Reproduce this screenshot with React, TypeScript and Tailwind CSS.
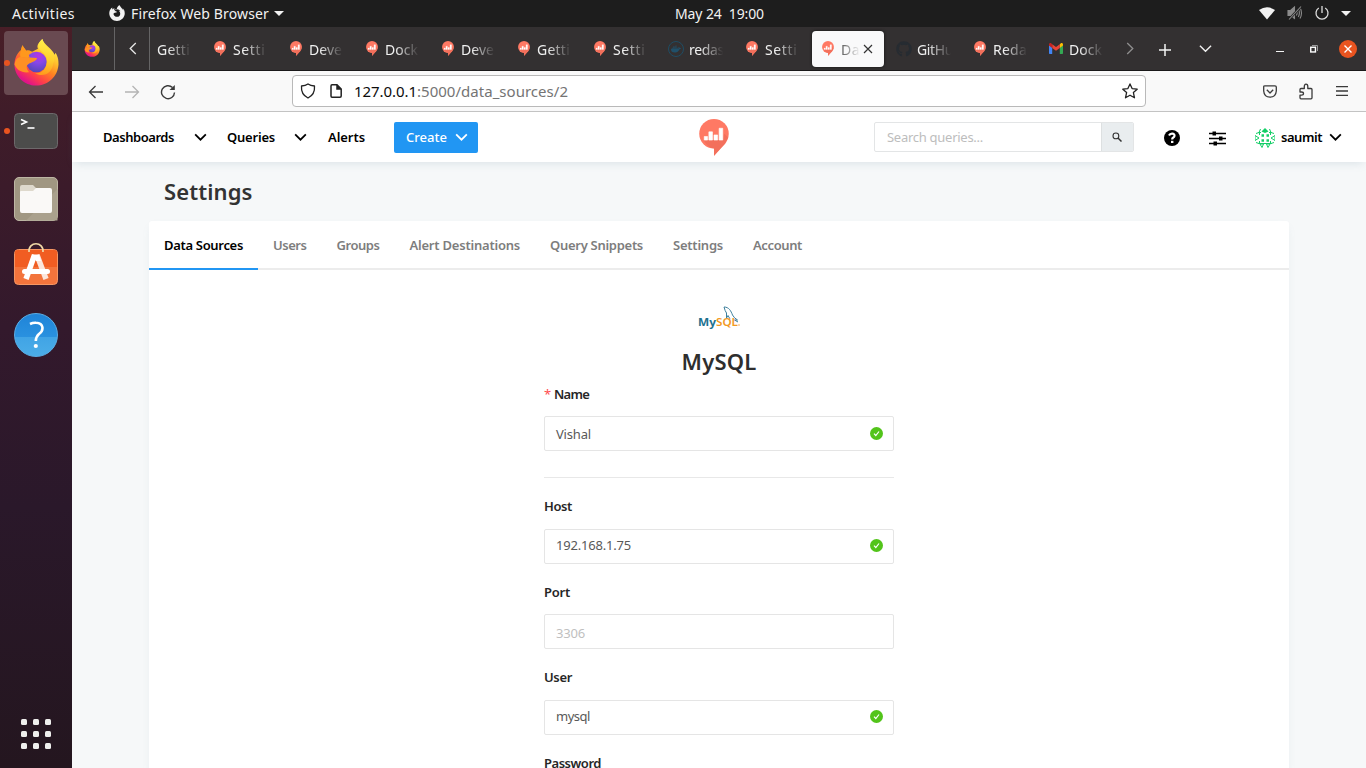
import React, { useLayoutEffect, useRef } from "react";
import { FaGithub } from "react-icons/fa";
import { SiDocker, SiFirefoxbrowser } from "react-icons/si";

/* Single-line label whose tracking is adjusted so that it fills `w` pixels. */
function Label({ w, className = "", children }: { w: number; className?: string; children: string }) {
  const ref = useRef<HTMLSpanElement>(null);
  useLayoutEffect(() => {
    const el = ref.current;
    if (!el) return;
    el.style.letterSpacing = "0px";
    const natural = el.getBoundingClientRect().width;
    el.style.letterSpacing = `${(w - natural) / children.length}px`;
  }, [w, children]);
  return (
    <span ref={ref} className={`inline-block shrink-0 whitespace-pre ${className}`}>
      {children}
    </span>
  );
}

function FirefoxLogo({ id, className }: { id: string; className: string }) {
  return (
    <svg viewBox="0 0 46 48" className={className}>
      <defs>
        <linearGradient id={`${id}b`} x1="0.9" y1="0.15" x2="0.35" y2="0.98">
          <stop offset="0" stopColor="#fff04a" />
          <stop offset="0.28" stopColor="#ffc22e" />
          <stop offset="0.52" stopColor="#ff8420" />
          <stop offset="0.78" stopColor="#ff4048" />
          <stop offset="1" stopColor="#e0128a" />
        </linearGradient>
        <radialGradient id={`${id}g`} cx="0.6" cy="0.2" r="0.85">
          <stop offset="0" stopColor="#b833e1" />
          <stop offset="0.4" stopColor="#8847ea" />
          <stop offset="1" stopColor="#5047b4" />
        </radialGradient>
        <linearGradient id={`${id}f`} x1="0.6" y1="0" x2="0.5" y2="1">
          <stop offset="0" stopColor="#fff24c" />
          <stop offset="0.55" stopColor="#ffd02f" />
          <stop offset="1" stopColor="#ff9a1b" />
        </linearGradient>
      </defs>
      <path
        d="M1 26C1 20 4 14 7.500 11.500L9 6.500L13 12C15 11.500 17 12 19 13L25 10C23 6 27 3 29.500 0C31 6 39 9 42 16L43 14C46 19 46 23 46 26C45 39 35 47.500 23 47.500C11 47.500 1 38 1 26Z"
        fill={`url(#${id}b)`}
      />
      <ellipse cx="23.500" cy="23.500" rx="10.500" ry="10.500" fill={`url(#${id}g)`} />
      <path d="M29.500 0C24 5 24 9 29 13C34 17 35.500 22 33 28C31 33 27 35 22 35C31 40 40 34 40.500 25C42 22 42 20 41 17C38 10 31 7 29.500 0Z" fill={`url(#${id}f)`} />
      <path d="M1 26C2 21 4 19 7 18.500C11 18 15 20 17 19L24 19.500C24 22 20 23.500 17.500 24.500C13 26 12 29 16 34C8 35 3 31 1 26Z" fill="#ff9024" />
      <path d="M7 18.500C6 15 8 11 9 6.500L13 12C15 11.500 17 12 18 12.500C15.500 14 15 16.500 17 19C13 20 11 18 7 18.500Z" fill="#ff981d" />
    </svg>
  );
}

function RedashLogo({ className }: { className: string }) {
  return (
    <svg viewBox="0 0 29 36" className={className}>
      <path d="M14.500 0A14.300 14.300 0 1 1 14.500 28.700A14.300 14.300 0 0 1 14.500 0Z" fill="#ff7964" />
      <path d="M14.500 28V36L26.500 22.500Z" fill="#ff7964" />
      <path d="M4.500 20.500H23L24.500 14L28 18C27 21 25.500 24 23 26.500L14.500 35.500V28.600C11 28.600 7 26 4.500 20.500Z" fill="#ed6b58" opacity="0.65" />
      <path d="M5 17h3.200v3.500h-3.200zM9.500 12.500h3.500v8h-3.500zM14.500 15.500h3.500v5h-3.500zM19.500 9h3.500v11.500h-3.500z" fill="#fff" stroke="#fff" strokeWidth="0.600" strokeLinejoin="round" />
    </svg>
  );
}

function GmailLogo() {
  return (
    <svg viewBox="0 0 14 11" className="h-[11px] w-[14px]">
      <path d="M0 2v8.200c0 .5.300.8.800.8H3.200V4.500z" fill="#4285f4" />
      <path d="M14 2v8.200c0 .5-.3.800-.8.800H10.800V4.500z" fill="#34a853" />
      <path d="M10.800 1.200V5L14 2.600V1.500C14 .2 12.600-.4 11.600.5z" fill="#fbbc04" />
      <path d="M3.200 5V1.200L7 4l3.800-2.800V5L7 7.800z" fill="#ea4335" />
      <path d="M0 1.500V2.600L3.200 5V1.200L2.400.5C1.400-.4 0 .2 0 1.500z" fill="#c5221f" />
    </svg>
  );
}

function Chevron({ className, d = "M1 1.500L7 7.500L13 1.500", width = 2 }: { className: string; d?: string; width?: number }) {
  return (
    <svg viewBox="0 0 14 9" className={className} fill="none" stroke="currentColor" strokeWidth={width}>
      <path d={d} />
    </svg>
  );
}

function TopBar() {
  return (
    <div className="flex h-[27px] shrink-0 items-center bg-[#1d1d1d] text-[14px] text-[#f2f2f2]">
      <Label w={63} className="ml-3">Activities</Label>
      <SiFirefoxbrowser className="-mt-[2px] ml-[34px] h-[16px] w-[16px]" />
      <Label w={138} className="ml-[6px]">Firefox Web Browser</Label>
      <svg viewBox="0 0 10 5" className="ml-[5px] h-[5px] w-[10px]"><path d="M0 0H10L5 5Z" fill="#f2f2f2" /></svg>
      <Label w={89} className="-mt-px ml-[391px]">May 24  19:00</Label>
      <svg viewBox="0 0 16 13" className="-mt-px ml-auto h-[13px] w-[16px]"><path d="M0 3Q8-2.500 16 3L8 12.500Z" fill="#f2f2f2" /></svg>
      <svg viewBox="0 0 16 16" className="-mt-px ml-3 h-4 w-4" fill="none" stroke="#8b8b8b" strokeWidth="1.100">
        <path d="M1 5.500H3.500L7.500 2V13.500L3.500 10.500H1Z" fill="#8b8b8b" />
        <path d="M9.300 5.500Q11 8 9.300 10.500M11.300 4Q13.500 8 11.300 12M13 2.500Q16 8 13 13.500" />
        <path d="M2 14.500L14 1.500" stroke="#1d1d1d" strokeWidth="2.500" />
        <path d="M2 14.500L14 1.500" />
      </svg>
      <svg viewBox="0 0 16 16" className="-mt-px ml-[11px] h-4 w-4" fill="none" stroke="#dedede" strokeWidth="1.300">
        <path d="M8 1V8M4.800 3A6 6 0 1 0 11.200 3" />
      </svg>
      <svg viewBox="0 0 10 5" className="mr-[15px] ml-[11px] h-[5px] w-[10px]"><path d="M0 0H10L5 5Z" fill="#f2f2f2" /></svg>
    </div>
  );
}

function Dock() {
  return (
    <div className="flex w-[72px] shrink-0 flex-col bg-[linear-gradient(#481e27_0px,#3f1c29_90px,#33192c_300px,#2a182a_480px,#24161f_741px)]">
      <div className="mt-[4px] flex h-16 items-center">
        <span className="h-[6px] w-[6px] translate-x-[4px] rounded-full bg-[#e95420]" />
        <span className="-ml-[2px] flex h-16 w-16 items-center justify-center rounded-[4px] bg-[#694a51] pb-[2px]">
          <FirefoxLogo id="dock" className="h-[47px] w-[46px]" />
        </span>
      </div>
      <div className="mt-[17px] flex h-[38px] items-center">
        <span className="h-[6px] w-[6px] translate-x-[4px] rounded-full bg-[#e95420]" />
        <svg viewBox="0 0 44 36" className="ml-[8px] h-[36px] w-[44px]">
          <rect x="0.500" y="0.500" width="43" height="35" rx="4" fill="#4c4c4b" stroke="#6d696b" />
          <path d="M7 6.500L12.500 9L7 11.500" fill="none" stroke="#fff" strokeWidth="1.600" />
          <path d="M13.500 15H20.500" stroke="#fff" strokeWidth="1.600" />
        </svg>
      </div>
      <svg viewBox="0 0 44 44" className="mt-[27px] ml-[14px] h-[44px] w-[44px]">
        <rect x="0.500" y="0.500" width="43" height="43" rx="4.500" fill="#a09782" stroke="#bdb6a4" />
        <path d="M12 43.500L43.500 12V43.500Z" fill="#aaa18d" />
        <path d="M6 10Q6 8 8 8H19L22 11H36V20H6Z" fill="#ded9cc" />
        <path d="M6 15Q6 14 7 14H19L22 11H36Q38 11 38 13V34Q38 36 36 36H8Q6 36 6 34Z" fill="#faf9f7" />
      </svg>
      <svg viewBox="0 0 44 44" className="mt-[21px] ml-[14px] h-[44px] w-[44px]">
        <rect x="0.500" y="7.500" width="43" height="35" rx="4" fill="#f3743c" stroke="#f59663" />
        <path d="M1 10Q1 8 4 8H40Q43 8 43 10V25H1Z" fill="#f15d22" />
        <path d="M15 10C14-1 30-1 29 10" fill="none" stroke="#efd8a6" strokeWidth="1.700" />
        <path d="M20.500 13L12 37" stroke="#fff" strokeWidth="5.500" />
        <path d="M23 13L32 37" stroke="#fbe6dc" strokeWidth="5.500" />
        <path d="M18 12.500H25L27 19L22 19Z" fill="#fff" />
        <rect x="8" y="27" width="28" height="5" rx="2.500" fill="#fff" />
      </svg>
      <div className="mt-[27px] ml-[14px] flex h-[44px] w-[44px] items-center justify-center rounded-full border border-[#5aaee6] bg-[linear-gradient(#1f84d8_0%,#2a91df_54%,#41a4e5_55%,#4bade8_100%)]">
        <svg viewBox="0 0 16 28" className="h-[28px] w-[16px]">
          <path d="M2 3Q5 1.500 8 1.700C16 2 16 9.500 11 13Q8 15.500 7.800 20" fill="none" stroke="#fff" strokeWidth="2.600" />
          <circle cx="7.800" cy="25" r="2.100" fill="#fff" />
        </svg>
      </div>
      <div className="mt-auto mb-[19px] ml-[21px] grid w-[30px] grid-cols-3 gap-[6px]">
        {Array.from({ length: 9 }, (_, i) => (
          <span key={i} className="h-[6px] w-[6px] rounded-[1.500px] bg-[#efefed]" />
        ))}
      </div>
    </div>
  );
}

const tabs: { title: string; w: number; icon: "redash" | "docker" | "github" | "gmail"; active?: boolean }[] = [
  { title: "Getti", w: 33, icon: "redash" },
  { title: "Setti", w: 32.5, icon: "redash" },
  { title: "Deve", w: 33, icon: "redash" },
  { title: "Dock", w: 33, icon: "redash" },
  { title: "Deve", w: 33, icon: "redash" },
  { title: "Getti", w: 33, icon: "redash" },
  { title: "Setti", w: 32.5, icon: "redash" },
  { title: "redas", w: 35, icon: "docker" },
  { title: "Setti", w: 32.5, icon: "redash" },
  { title: "Da", w: 19, icon: "redash", active: true },
  { title: "GitHu", w: 36, icon: "github" },
  { title: "Reda", w: 34, icon: "redash" },
  { title: "Dock", w: 33, icon: "gmail" },
];

function BrowserTab({ tab }: { tab: (typeof tabs)[number] }) {
  return (
    <div className="flex h-[43px] w-[76px] shrink-0 items-center px-[2px]">
      <div className={`flex h-[36px] w-[72px] items-center rounded-[4px] ${tab.active ? "bg-[#f9f9fa] text-[#555] shadow-[0_0_3px_#111]" : "text-[#f0f0f0]"}`}>
        <span className="ml-[8px] flex h-4 w-4 shrink-0 items-center justify-center">
          {tab.icon === "redash" && <RedashLogo className="h-[15px] w-[12px]" />}
          {tab.icon === "docker" && (
            <span className="flex h-4 w-4 items-center justify-center rounded-full border border-[#1f4c63] text-[#20506a]">
              <SiDocker className="h-[10px] w-[10px]" />
            </span>
          )}
          {tab.icon === "github" && <FaGithub className="h-4 w-4 text-[#262b31]" />}
          {tab.icon === "gmail" && <GmailLogo />}
        </span>
        <span
          className={`mt-[2px] ml-[5px] shrink-0 overflow-hidden text-[14px] leading-5 ${
            tab.active
              ? "w-[19px] [mask-image:linear-gradient(to_right,black_0%,transparent_100%)]"
              : "w-[36px] [mask-image:linear-gradient(to_right,black_30%,transparent_95%)]"
          }`}
        >
          <Label w={tab.w}>{tab.title}</Label>
        </span>
        {tab.active && (
          <svg viewBox="0 0 10 10" className="ml-[3px] h-[10px] w-[10px] shrink-0" stroke="#333" strokeWidth="1.200"><path d="M1 1L9 9M9 1L1 9" /></svg>
        )}
      </div>
    </div>
  );
}

function TabStrip() {
  return (
    <div className="flex h-[44px] shrink-0 items-center border-b border-[#1a191a] bg-[#333031] text-[#f0f0f0]">
      <div className="flex h-full w-[43px] items-center justify-center border-r border-[#656465] pr-[2px]">
        <FirefoxLogo id="pin" className="h-[16px] w-[16px]" />
      </div>
      <div className="flex h-full w-[35px] items-center justify-center border-r border-[#656465]">
        <svg viewBox="0 0 8 14" className="ml-[2px] h-[13px] w-[8px]" fill="none" stroke="#e8e8e8" strokeWidth="1.400"><path d="M7 1L1 7L7 13" /></svg>
      </div>
      <div className="flex w-[964px] overflow-hidden">
        <div className="-ml-[24px] flex">
          {tabs.map((t, i) => <BrowserTab key={i} tab={t} />)}
        </div>
      </div>
      <svg viewBox="0 0 8 14" className="ml-[12px] h-[13px] w-[8px]" fill="none" stroke="#8f8e8f" strokeWidth="1.400"><path d="M1 1L7 7L1 13" /></svg>
      <svg viewBox="0 0 12 12" className="mt-[2px] ml-[25px] h-[12px] w-[12px]" stroke="#f4f4f4" strokeWidth="1.500"><path d="M6 0V12M0 6H12" /></svg>
      <Chevron className="ml-[28px] h-[9px] w-[13px]" width={1.5} />
      <span className="mt-[5px] ml-[64px] h-[1px] w-[8px] bg-[#f4f4f4]" />
      <svg viewBox="0 0 8 8" className="mt-px ml-[26px] h-[8px] w-[8px]" fill="none">
        <path d="M2 0.500H7.500V6" stroke="#9a999a" /><rect x="0.750" y="2.250" width="4.700" height="4.700" stroke="#fff" strokeWidth="1.400" />
      </svg>
      <span className="ml-[21px] flex h-[18px] w-[18px] items-center justify-center rounded-full bg-[#e95420]">
        <svg viewBox="0 0 8 8" className="h-[8px] w-[8px]" stroke="#fff" strokeWidth="1.400"><path d="M0.500 0.500L7.500 7.500M7.500 0.500L0.500 7.500" /></svg>
      </span>
    </div>
  );
}

function Toolbar() {
  return (
    <div className="flex h-[41px] shrink-0 items-center border-b border-[#c4c4c4] bg-[#f9f9f9] text-[#3a3a3a]">
      <svg viewBox="0 0 16 16" className="mt-px ml-[16px] h-4 w-4" fill="none" stroke="currentColor" strokeWidth="1.300"><path d="M15 8H1.500M7.500 2L1.500 8L7.500 14" /></svg>
      <svg viewBox="0 0 16 16" className="mt-px ml-5 h-4 w-4" fill="none" stroke="#b4b4b4" strokeWidth="1.300"><path d="M1 8H14.500M8.500 2L14.500 8L8.500 14" /></svg>
      <svg viewBox="0 0 16 16" className="mt-[1px] ml-5 h-4 w-4" fill="none" stroke="currentColor" strokeWidth="1.400"><path d="M14.500 8.500A6.500 6.500 0 1 1 12.500 3.500" /><path d="M14.800 1V6H9.500Z" fill="currentColor" stroke="none" /></svg>
      <div className="ml-[116px] flex h-[32px] w-[854px] items-center rounded-[4px] border border-[#b9b9b9] bg-white text-[15px]">
        <svg viewBox="0 0 16 16" className="ml-[7px] h-4 w-4" fill="none" stroke="#222" strokeWidth="1.300"><path d="M8 1Q5.500 2.800 1.500 3Q0.800 11.500 8 15Q15.200 11.500 14.500 3Q10.500 2.800 8 1Z" strokeLinejoin="round" /></svg>
        <svg viewBox="0 0 12 14" className="ml-[14px] h-[14px] w-[12px]" fill="none" stroke="#222" strokeWidth="1.500"><path d="M1 2Q1 .8 2 .8H7L11.200 5V12Q11.200 13.200 10 13.200H2Q1 13.200 1 12Z" /><path d="M7 1V5H11" fill="#222" /></svg>
        <Label w={63} className="ml-[12px] text-[#0c0c0c]">127.0.0.1</Label>
        <Label w={151} className="text-[#747474]">:5000/data_sources/2</Label>
        <svg viewBox="0 0 16 16" className="mr-[7px] ml-auto h-4 w-4" fill="none" stroke="#222" strokeWidth="1.300" strokeLinejoin="round"><path d="M8 .9L10.100 5.600L15.200 6.200L11.400 9.600L12.500 14.800L8 12.200L3.500 14.800L4.600 9.600L.8 6.200L5.900 5.600Z" /></svg>
      </div>
      <svg viewBox="0 0 14 13" className="ml-[117px] h-[13px] w-[14px]" fill="none" stroke="currentColor" strokeWidth="1.300" strokeLinejoin="round"><path d="M2 .8H12Q13.300.8 13.300 2V6Q12.800 12.200 7 12.200Q1.200 12.200.7 6V2Q.7.800 2 .8Z" /><path d="M3.800 4.800L7 8L10.200 4.800" /></svg>
      <svg viewBox="0 0 16 17" className="ml-[21px] h-[17px] w-4" fill="none" stroke="currentColor" strokeWidth="1.300" strokeLinejoin="round"><path d="M2 9H3.500Q5.500 9 5.500 10.600Q5.500 12.200 3.500 12.200H2V14.800Q2 15.800 3 15.800H13Q14 15.800 14 14.800V6.500Q14 5.500 13 5.500H9.800V3.500Q9.800 1.200 8 1.200Q6.300 1.200 6.300 3.500V5.500H3Q2 5.500 2 6.500Z" /></svg>
      <svg viewBox="0 0 12 10" className="-mt-px ml-[22px] h-[10px] w-[12px]" stroke="currentColor" strokeWidth="1.300"><path d="M0 .7H12M0 5H12M0 9.300H12" /></svg>
    </div>
  );
}

function Avatar() {
  return (
    <svg viewBox="0 0 20 20" className="h-5 w-5" fill="none" stroke="#13ce66">
      <path d="M10 0L13.500 3.500L10 5L6.500 3.500Z" fill="#13ce66" stroke="none" />
      <path d="M5.500 1L4 4.500L1 5.500M14.500 1L16 4.500L19 5.500M0 7.500L4 10L0 12.500ZM20 7.500L16 10L20 12.500ZM1 14.500L4 15.500M19 14.500L16 15.500M5 16L7 19.500L8.500 16ZM11.500 16L13 19.500L15 16Z" strokeWidth="1" />
      <path d="M3.500 4.500H6M14 4.500H16.500M3.500 15.500H16.500M4.500 4V7M15.500 4V7M4.500 13V16M15.500 13V16" strokeWidth="1" />
      <path d="M6.500 7.500H9M11.500 7.500H14M6.500 12.500H9M11.500 12.500H14" strokeWidth="2.400" />
    </svg>
  );
}

function AppHeader() {
  return (
    <div className="z-10 flex h-[50px] shrink-0 items-center bg-white text-[13px] font-semibold text-black shadow-[0_4px_9px_-3px_rgba(102,136,153,0.2)]">
      <Label w={71} className="mt-[2px] ml-[31px]">Dashboards</Label>
      <Chevron className="ml-[20px] h-[8px] w-[13px]" />
      <Label w={48} className="mt-[2px] ml-[20px]">Queries</Label>
      <Chevron className="ml-[19px] h-[8px] w-[13px]" />
      <Label w={37} className="mt-[2px] ml-[21px]">Alerts</Label>
      <div className="ml-[29px] flex h-[31px] w-[84px] items-center rounded-[2px] bg-[#2196f3] font-medium text-white">
        <Label w={41} className="mt-[2px] ml-[12px]">Create</Label>
        <Chevron className="ml-[8px] h-[8px] w-[13px]" />
      </div>
      <RedashLogo className="mt-px ml-[221px] h-[37px] w-[30px]" />
      <div className="ml-[145px] flex h-[30px] w-[260px] overflow-hidden rounded-[2px] border border-[#e3e5e6] font-normal">
        <div className="flex w-[226px] items-center pt-[2px] pl-[12px] text-[#bdbdbd]"><Label w={96}>Search queries...</Label></div>
        <div className="flex flex-1 items-center justify-center border-l border-[#dde0e1] bg-[#e9edef]">
          <svg viewBox="0 0 10 10" className="-mt-px mr-px h-[10px] w-[10px]" fill="none" stroke="#333"><circle cx="3.900" cy="3.900" r="2.900" strokeWidth="1.100" /><path d="M6 6L9.500 9.500" strokeWidth="1.500" /></svg>
        </div>
      </div>
      <svg viewBox="0 0 16 16" className="mt-px ml-[30px] h-4 w-4"><circle cx="8" cy="8" r="8" fill="#000" /><path d="M5 5.500Q6 3.500 8.200 3.600Q10.600 3.700 10.500 5.800Q10.400 7 9 7.800Q8.200 8.300 8.200 9.500" fill="none" stroke="#fff" strokeWidth="2.200" /><path d="M7 10.800H9.400V13H7Z" fill="#fff" /></svg>
      <svg viewBox="0 0 17 15" className="mt-[2px] ml-[29px] h-[15px] w-[17px]" stroke="#000"><path d="M0 2.500H17M0 7.500H17M0 12.500H17" strokeWidth="1.500" /><path d="M3.500 2.500H7M10 7.500H13.500M4.500 12.500H8" strokeWidth="4" /></svg>
      <div className="mt-px ml-[29px] flex items-center"><Avatar /></div>
      <Label w={41} className="mt-[2px] ml-[6px]">saumit</Label>
      <Chevron className="ml-[7px] h-[8px] w-[13px]" />
    </div>
  );
}

const settingsTabs: [string, number][] = [
  ["Data Sources", 79],
  ["Users", 33.5],
  ["Groups", 43],
  ["Alert Destinations", 110.5],
  ["Query Snippets", 93],
  ["Settings", 50],
  ["Account", 49],
];

function MySqlLogo() {
  return (
    <svg viewBox="0 0 42 24" className="h-[24px] w-[42px]">
      <path d="M26 1C31 1 33 5 34.500 9Q36 12 39.500 14L36.500 14L40 16M26 1Q27 5 28.500 7V12L30 9.500L32 13" fill="none" stroke="#3d7f9c" strokeWidth="1" />
      <text x="0" y="19.500" fontSize="10.500" fontWeight="700" textLength="18" lengthAdjust="spacingAndGlyphs" fill="#20718f">My</text>
      <text x="18" y="19.500" fontSize="10.500" fontWeight="600" textLength="22" lengthAdjust="spacingAndGlyphs" fill="#f29a1f">SQL</text>
      <circle cx="41" cy="19" r="0.700" fill="#f29a1f" />
    </svg>
  );
}

const fieldStyles = {
  low: "pt-[2px] text-[#595959]",
  high: "pb-px text-[#595959]",
  placeholder: "pt-[4px] text-[#bfbfbf]",
};

function Field({ value, w, kind, valid }: { value: string; w: number; kind: keyof typeof fieldStyles; valid?: boolean }) {
  return (
    <div className={`flex h-[35px] items-center justify-between rounded-[2px] border border-[#e5e5e5] pr-[10px] pl-[11px] ${fieldStyles[kind]}`}>
      <Label w={w}>{value}</Label>
      {valid && (
        <svg viewBox="0 0 13 13" className="-mt-[2px] h-[13px] w-[13px]"><circle cx="6.500" cy="6.500" r="6.500" fill="#52c41a" /><path d="M4 6.700L5.800 8.500L9 4.500" fill="none" stroke="#fff" strokeWidth="1.200" /></svg>
      )}
    </div>
  );
}

const labelClass = "h-5 leading-5 font-semibold text-[#262626]";

function SettingsPage() {
  return (
    <div className="flex flex-1 flex-col overflow-hidden bg-[#f6f8f9]">
      <div className="mt-[14px] ml-[92px] flex h-[30px] items-center text-[22px] font-semibold text-[#333]"><Label w={88.5}>Settings</Label></div>
      <div className="mt-[15px] ml-[77px] flex h-[620px] w-[1140px] flex-col rounded-t-[3px] bg-white text-[13px] shadow-[0_4px_9px_-3px_rgba(102,136,153,0.15)]">
        <div className="flex h-[49px] shrink-0 border-b-2 border-[#ececec]">
          {settingsTabs.map(([name, w], i) => (
            <div key={name} className={`flex h-[49px] items-center px-[15px] pt-[2px] font-semibold ${i === 0 ? "border-b-2 border-[#2196f3] text-black" : "border-b-2 border-transparent text-[#7d7d7d]"}`}>
              <Label w={w}>{name}</Label>
            </div>
          ))}
        </div>
        <div className="mx-auto flex w-[350px] flex-col">
          <div className="mt-[36px] flex h-[24px] justify-center"><MySqlLogo /></div>
          <div className="mt-[16px] flex h-[30px] items-center justify-center text-[22px] font-semibold text-[#2e2e2e]"><Label w={75}>MySQL</Label></div>
          <div className={`mt-[8px] flex ${labelClass}`}>
            <span className="w-[10px] font-normal text-[#ff4d4f]">*</span>
            <Label w={35}>Name</Label>
          </div>
          <div className="mt-[12px]"><Field value="Vishal" w={35} kind="low" valid /></div>
          <div className="mt-[26px] h-px bg-[#e8e8e8]" />
          <div className={`mt-[18px] ${labelClass}`}><Label w={28}>Host</Label></div>
          <div className="mt-[13px]"><Field value="192.168.1.75" w={75} kind="high" valid /></div>
          <div className={`mt-[18px] ${labelClass}`}><Label w={26}>Port</Label></div>
          <div className="mt-[12px]"><Field value="3306" w={29} kind="placeholder" /></div>
          <div className={`mt-[18px] ${labelClass}`}><Label w={28}>User</Label></div>
          <div className="mt-[13px]"><Field value="mysql" w={34} kind="high" valid /></div>
          <div className={`mt-[18px] ${labelClass}`}><Label w={57}>Password</Label></div>
        </div>
      </div>
    </div>
  );
}

export default function App() {
  return (
    <div className="flex h-[768px] w-[1366px] flex-col overflow-hidden font-['Noto_Sans','Open_Sans',sans-serif]">
      <TopBar />
      <div className="flex min-h-0 flex-1">
        <Dock />
        <div className="flex w-[1294px] flex-col">
          <TabStrip />
          <Toolbar />
          <AppHeader />
          <SettingsPage />
        </div>
      </div>
    </div>
  );
}
